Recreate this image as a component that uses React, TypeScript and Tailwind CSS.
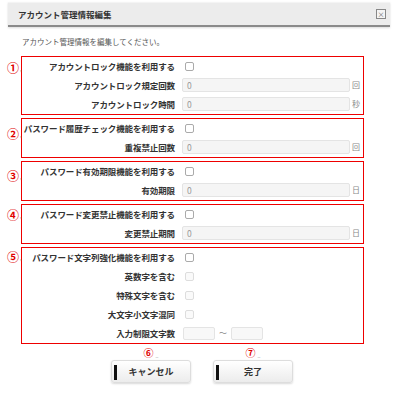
import React from "react";

const font = "font-['Noto_Sans_CJK_JP','Noto_Sans',sans-serif]";

interface RowProps {
  label: string;
  kind: "check" | "input" | "range";
  unit?: string;
  disabled?: boolean;
}

const Row = ({ label, kind, unit, disabled }: RowProps) => {
  return (
    <div className="flex items-center h-[19px]">
      <div className="w-[153px] text-right whitespace-nowrap text-[8.5px] font-bold text-[#333] leading-none tracking-[-0.1px]">
        {label}
      </div>
      <div className="ml-[7px] flex items-center">
        {kind === "check" && (
          <span
            className={
              disabled
                ? "ml-[3px] w-[9px] h-[9px] rounded-[2px] border border-[#ddd] bg-[#fafafa]"
                : "ml-[3px] w-[9px] h-[9px] rounded-[2px] border border-[#aaa] bg-white"
            }
          />
        )}
        {kind === "input" && (
          <>
            <div className="w-[168px] h-[14px] rounded-[2px] border border-[#e4e4e4] bg-[#f5f5f5] flex items-center pl-[4px] text-[8.5px] text-[#999] leading-none">
              0
            </div>
            <span className="ml-[2px] text-[8px] text-[#888] leading-none">
              {unit}
            </span>
          </>
        )}
        {kind === "range" && (
          <>
            <div className="ml-[1px] w-[32px] h-[13px] rounded-[2px] border border-[#e4e4e4] bg-[#f8f8f8]" />
            <span className="mx-[4px] text-[8px] text-[#888] leading-none">
              ～
            </span>
            <div className="w-[32px] h-[13px] rounded-[2px] border border-[#e4e4e4] bg-[#f8f8f8]" />
          </>
        )}
      </div>
    </div>
  );
};

interface SectionProps {
  num: string;
  numTop: string;
  children: React.ReactNode;
}

const Section = ({ num, numTop, children }: SectionProps) => {
  return (
    <div className="flex">
      <div className="w-[21px] relative">
        <span
          className={`absolute left-[7px] ${numTop} text-[12px] leading-none text-[#e00000] font-bold`}
        >
          {num}
        </span>
        <span className={`absolute left-[20px] ${numTop} mt-[4px] text-[6px] text-[#999] leading-none`}>
          ,
        </span>
      </div>
      <div className="w-[343px] border border-[#ee0000] flex flex-col">
        {children}
      </div>
    </div>
  );
};

const Button = ({ num, label }: { num: string; label: string }) => {
  return (
    <div className="flex flex-col items-center w-[80px]">
      <div className="h-[12px] flex items-start">
        <span className="text-[10px] leading-none text-[#e00000] font-bold">
          {num}
        </span>
        <span className="ml-[2px] mt-[5px] text-[5px] text-[#999] leading-none">
          ..
        </span>
      </div>
      <button className="w-[80px] h-[23px] rounded-[3px] border border-[#ddd] bg-gradient-to-b from-white to-[#ececec] shadow-[0_1px_2px_rgba(0,0,0,0.15)] flex items-center relative">
        <span className="absolute left-[2px] top-[4px] w-[3px] h-[15px] bg-[#111]" />
        <span className="flex-1 text-center text-[9px] font-bold text-[#333] leading-none">
          {label}
        </span>
      </button>
    </div>
  );
};

export default function App() {
  return (
    <div className={`w-[393px] h-[400px] bg-white ${font} overflow-hidden`}>
      <div className="ml-[8px] mr-[3px] mt-[2px] h-[25px] bg-[#ececec] border-t border-[#f4f4f4] border-b-2 border-b-[#8a8a8a] shadow-[0_1px_2px_rgba(0,0,0,0.15)] flex items-center justify-between pl-[10px] pr-[4px]">
        <span className="text-[8.5px] font-bold text-[#333] leading-none">
          アカウント管理情報編集
        </span>
        <span className="w-[10px] h-[10px] border border-[#888] bg-[#f4f4f4] flex items-center justify-center text-[7px] leading-none text-[#666]">
          ×
        </span>
      </div>
      <div className="mt-[11px] pl-[22px] text-[7.5px] text-[#555] leading-none">
        アカウント管理情報を編集してください。
      </div>
      <div className="mt-[10px] flex flex-col gap-[3px]">
        <Section num="①" numTop="top-[6px]">
          <Row label="アカウントロック機能を利用する" kind="check" />
          <Row label="アカウントロック規定回数" kind="input" unit="回" />
          <Row label="アカウントロック時間" kind="input" unit="秒" />
        </Section>
        <Section num="②" numTop="top-[10px]">
          <Row label="パスワード履歴チェック機能を利用する" kind="check" />
          <Row label="重複禁止回数" kind="input" unit="回" />
        </Section>
        <Section num="③" numTop="top-[9px]">
          <Row label="パスワード有効期限機能を利用する" kind="check" />
          <Row label="有効期限" kind="input" unit="日" />
        </Section>
        <Section num="④" numTop="top-[5px]">
          <Row label="パスワード変更禁止機能を利用する" kind="check" />
          <Row label="変更禁止期間" kind="input" unit="日" />
        </Section>
        <Section num="⑤" numTop="top-[4px]">
          <Row label="パスワード文字列強化機能を利用する" kind="check" />
          <Row label="英数字を含む" kind="check" disabled />
          <Row label="特殊文字を含む" kind="check" disabled />
          <Row label="大文字小文字混同" kind="check" disabled />
          <Row label="入力制限文字数" kind="range" />
        </Section>
      </div>
      <div className="mt-[4px] pl-[111px] flex gap-[22px]">
        <Button num="⑥" label="キャンセル" />
        <Button num="⑦" label="完了" />
      </div>
    </div>
  );
}
